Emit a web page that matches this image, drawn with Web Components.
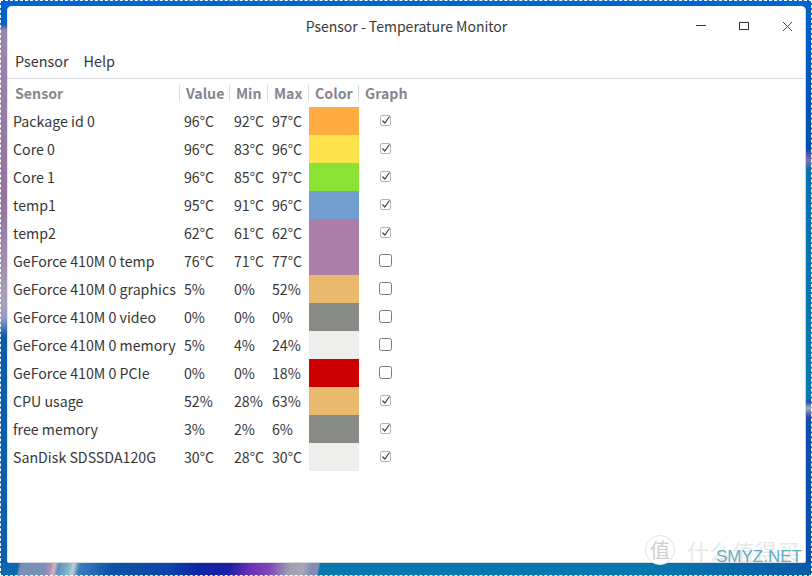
<!DOCTYPE html>
<html lang="en">
<head>
<meta charset="UTF-8" />
<title>Psensor</title>
<style>
  html, body { margin: 0; height: 100%; }
  body { font-family: "Noto Sans CJK SC", "Noto Sans", sans-serif; overflow: hidden; }
</style>
</head>
<body>
<desktop-bg>
  <app-window title="Psensor - Temperature Monitor">
    <menu-bar><span>Psensor</span><span>Help</span></menu-bar>
    <sensor-table id="table"></sensor-table>
  </app-window>
</desktop-bg>
<water-mark></water-mark>

<script>
  class DesktopBg extends HTMLElement {
    connectedCallback() {
      this.attachShadow({ mode: 'open' }).innerHTML = `
        <style>
          :host { display: block; width: 812px; height: 576px; box-sizing: border-box; padding: 6px 6px 13px 7px; position: relative;
            background:
              linear-gradient(102deg, #0a6ab0 0 18px, #7a8fb8 21px 44px, #a98fb5 50px, #d8b0c0 54px, #5f8fc0 58px, #7fb8c8 68px, #c0ccd0 73px, #3d7fc0 78px, #0c52a8 110px, #0d45a8 165px, #0f25a5 195px, #1a1fa5 225px, #6a2fb5 245px, #8048b8 265px, #a2a0b0 285px, #a8a6b2 298px, #7f8db8 306px, #7f8db8 312px, #0877ae 314px, #0777ae 640px, #0858a8 812px) bottom / 100% 13px no-repeat,
              linear-gradient(180deg, #0060cc 0 20px, #1366c0 25px, #9a86ad 30px, #93739f 200px, #aaa2bd 305px, #8f9cc4 318px, #0b5cac 336px, #0a60ae 100%) left / 7px 100% no-repeat,
              linear-gradient(180deg, #0060cc 0, #0050a8 148px, #3848ac 152px, #7a78b0 160px, #0a70ac 170px, #0779ae 398px, #2150b0 402px, #a6afb8 408px, #2f4eb0 416px, #0850aa 420px, #0850a8 100%) right / 6px 100% no-repeat,
              #0066cc; }
          .dash { position: absolute; inset: 0; border: 1px dashed #fff; pointer-events: none; }
        </style>
        <slot></slot><div class="dash"></div>`;
    }
  }

  class AppWindow extends HTMLElement {
    connectedCallback() {
      const title = this.getAttribute('title');
      this.attachShadow({ mode: 'open' }).innerHTML = `
        <style>
          :host { display: flex; flex-direction: column; height: 100%; background: #fff; border-radius: 5px 5px 3px 3px;
            box-shadow: inset 0 -1px 0 #d8dce2, inset 1px 0 0 #e4e6ea, inset -1px 0 0 #d4d4d8; }
          header { flex: none; height: 39px; display: grid; grid-template-columns: 1fr auto 1fr; align-items: center; padding-top: 1px; box-sizing: border-box; }
          h1 { grid-column: 2; margin: 0; font-size: 14px; font-weight: 400; color: #3a3a3a; line-height: 1; }
          .ctl { display: flex; justify-content: flex-end; align-items: center; padding-top: 2px; }
          .ctl svg { display: block; height: 20px; }
        </style>
        <header>
          <h1>${title}</h1>
          <div class="ctl">
            <svg width="43" viewBox="0 0 43 20"><path d="M0 8.5H10" stroke="#333" stroke-width="1" fill="none"/></svg>
            <svg width="44" viewBox="0 0 44 20"><rect x=".5" y="5.5" width="9" height="7" stroke="#333" stroke-width="1" fill="none"/></svg>
            <svg width="23" viewBox="0 0 23 20"><path d="M0 5L9 14M9 5L0 14" stroke="#444" stroke-width="1" fill="none"/></svg>
          </div>
        </header>
        <slot></slot>`;
    }
  }

  class MenuBar extends HTMLElement {
    connectedCallback() {
      this.attachShadow({ mode: 'open' }).innerHTML = `
        <style>
          :host { display: flex; flex: none; height: 34px; gap: 15px; padding: 0 0 3px 8px; align-items: center; font-size: 14.4px; color: #363636; border-bottom: 1px solid #dcdce2; box-sizing: border-box; }
        </style>
        <slot></slot>`;
    }
  }

  class SensorCheck extends HTMLElement {
    connectedCallback() {
      const on = this.hasAttribute('checked');
      this.attachShadow({ mode: 'open' }).innerHTML = `
        <style>
          :host { display: block; width: 14px; height: 14px; }
          svg { display: block; }
        </style>
        <svg width="14" height="14" viewBox="0 0 14 14">
          ${on
            ? `<rect x="1.5" y="1.5" width="10" height="10" rx="1.5" fill="#fff" stroke="#b4b4b4"/>
               <path d="M3.5 6.5L5.8 9L10.5 2.5" fill="none" stroke="#444" stroke-width="1.2"/>`
            : `<rect x=".5" y=".5" width="12" height="12" rx="2" fill="#fff" stroke="#7c7c7c"/>`}
        </svg>`;
    }
  }

  class SensorTable extends HTMLElement {
    connectedCallback() {
      const rows = [
        ['Package id 0', '96°C', '92°C', '97°C', '#ffad40', 1],
        ['Core 0', '96°C', '83°C', '96°C', '#fde44c', 1],
        ['Core 1', '96°C', '85°C', '97°C', '#8ae234', 1],
        ['temp1', '95°C', '91°C', '96°C', '#729fcf', 1],
        ['temp2', '62°C', '61°C', '62°C', '#ad7fa8', 1],
        ['GeForce 410M 0 temp', '76°C', '71°C', '77°C', '#ad7fa8', 0],
        ['GeForce 410M 0 graphics', '5%', '0%', '52%', '#e9b96e', 0],
        ['GeForce 410M 0 video', '0%', '0%', '0%', '#888a85', 0],
        ['GeForce 410M 0 memory', '5%', '4%', '24%', '#eeeeec', 0],
        ['GeForce 410M 0 PCIe', '0%', '0%', '18%', '#cc0000', 0],
        ['CPU usage', '52%', '28%', '63%', '#e9b96e', 1],
        ['free memory', '3%', '2%', '6%', '#888a85', 1],
        ['SanDisk SDSSDA120G', '30°C', '28°C', '30°C', '#eeeeec', 1],
      ];
      const heads = ['Sensor', 'Value', 'Min', 'Max', 'Color', 'Graph'];
      this.attachShadow({ mode: 'open' }).innerHTML = `
        <style>
          :host { display: grid; grid-template-columns: 173px 50px 38px 41px 50px 56px; grid-auto-rows: 28px; justify-content: start; font-size: 14.2px; color: #363636; }
          .h { height: 28px; box-sizing: border-box; padding: 0 0 0 6px; font-weight: 700; color: #84878f; display: flex; align-items: center; position: relative; }
          .h.first { padding-left: 8px; }
          .h:not(.first)::before { content: ""; position: absolute; left: -1px; top: 6px; height: 16px; width: 1px; background: #dcdce2; }
          .c { padding: 0 0 1px 4px; display: flex; align-items: center; white-space: nowrap; }
          .s { padding-left: 6px; }
          .g { padding-left: 20px; display: flex; align-items: center; }
        </style>
        ${heads.map((h, i) => `<div class="h${i ? '' : ' first'}">${h}</div>`).join('')}
        ${rows.map(r => `
          <div class="c s">${r[0]}</div>
          <div class="c">${r[1]}</div>
          <div class="c">${r[2]}</div>
          <div class="c">${r[3]}</div>
          <div style="background:${r[4]}"></div>
          <div class="g"><sensor-check ${r[5] ? 'checked' : ''}></sensor-check></div>`).join('')}`;
    }
  }

  class WaterMark extends HTMLElement {
    connectedCallback() {
      this.attachShadow({ mode: 'open' }).innerHTML = `
        <style>
          :host { display: block; position: absolute; left: 645px; top: 535px; width: 167px; height: 34px; }
          .cn { position: absolute; left: 0; top: 0; display: flex; align-items: center; white-space: nowrap; }
          .ring { width: 28px; height: 28px; border: 1px solid #e4e4e4; border-radius: 50%; background: #fff; font-size: 20px; display: flex; align-items: center; justify-content: center; line-height: 1; color: #cfcfcf; }
          .t { margin-left: 12px; font-size: 22px; letter-spacing: .6px; line-height: 28px; color: #e8e8e8; }
          .en { position: absolute; left: 71px; top: 13px; font-family: "Liberation Sans", sans-serif; font-size: 17px; line-height: 18px; color: #61adc4; }
        </style>
        <div class="cn"><div class="ring">值</div><div class="t">什么值得买</div></div>
        <div class="en">SMYZ.NET</div>`;
    }
  }

  customElements.define('desktop-bg', DesktopBg);
  customElements.define('app-window', AppWindow);
  customElements.define('menu-bar', MenuBar);
  customElements.define('sensor-check', SensorCheck);
  customElements.define('sensor-table', SensorTable);
  customElements.define('water-mark', WaterMark);
</script>
</body>
</html>
